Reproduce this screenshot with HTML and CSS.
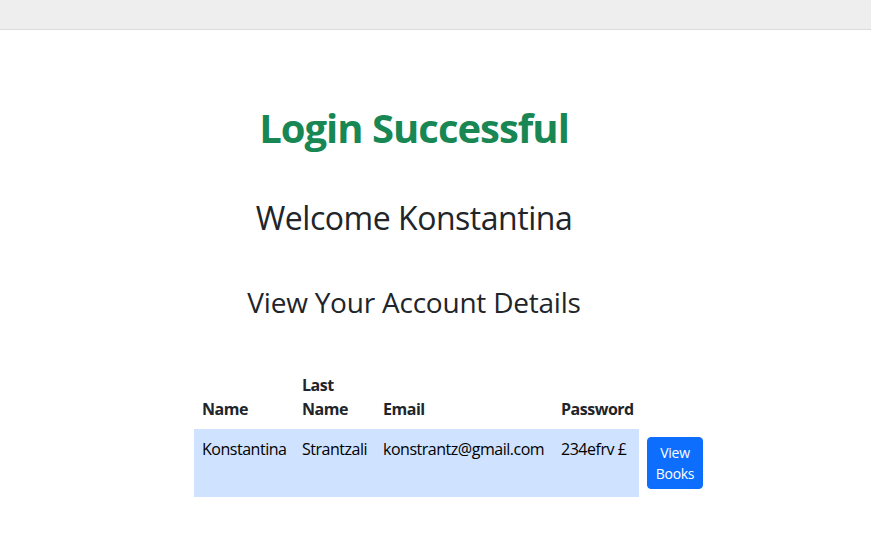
FILE: index.html
```html
<!DOCTYPE html>
<html lang="en">
<head>
<meta charset="utf-8">
<title>Login Successful</title>
<link rel="stylesheet" href="styles.css">
</head>
<body>
<div class="topbar"></div>
<main class="content">
  <h1 class="title">Login Successful</h1>
  <h2 class="welcome">Welcome Konstantina</h2>
  <h3 class="subtitle">View Your Account Details</h3>
  <table class="details">
    <colgroup>
      <col class="c-name">
      <col class="c-last">
      <col class="c-email">
      <col class="c-pass">
      <col class="c-btn">
    </colgroup>
    <thead>
      <tr>
        <th>Name</th>
        <th>Last Name</th>
        <th>Email</th>
        <th>Password</th>
        <th></th>
      </tr>
    </thead>
    <tbody>
      <tr>
        <td class="hl">Konstantina</td>
        <td class="hl">Strantzali</td>
        <td class="hl">konstrantz@gmail.com</td>
        <td class="hl">234efrv £</td>
        <td><button class="btn">View Books</button></td>
      </tr>
    </tbody>
  </table>
</main>
</body>
</html>
```

FILE: styles.css
```css
html, body {
  margin: 0;
  padding: 0;
  background: #ffffff;
}

body {
  font-family: "Open Sans", "Noto Sans", "DejaVu Sans", sans-serif;
  color: #212529;
  font-size: 16px;
  line-height: 24px;
  letter-spacing: -0.03em;
}

.topbar {
  height: 29px;
  background: #eeeeee;
  border-bottom: 1px solid #dcdcdc;
}

.content {
  width: 828px;
  padding-top: 74px;
  text-align: center;
}

.title {
  margin: 0;
  font-size: 40px;
  line-height: 48px;
  font-weight: 700;
  color: #198754;
  letter-spacing: -0.025em;
}

.welcome {
  margin: 47px 0 0;
  font-size: 32px;
  line-height: 38px;
  font-weight: 500;
  color: #212529;
  letter-spacing: -0.015em;
}

.subtitle {
  margin: 48px 0 0;
  font-size: 28px;
  line-height: 34px;
  font-weight: 500;
  color: #212529;
  letter-spacing: -0.008em;
}

.details {
  margin: 46px 0 0 194px;
  border-collapse: collapse;
  table-layout: fixed;
  width: 517px;
  text-align: left;
}

.c-name { width: 100px; }
.c-last { width: 81px; }
.c-email { width: 178px; }
.c-pass { width: 86px; }
.c-btn { width: 72px; }

.details th,
.details td {
  padding: 8px;
}

.details thead th {
  vertical-align: bottom;
  font-weight: 700;
}

.details tbody td {
  vertical-align: top;
}

.details .hl {
  background: #cfe2ff;
  color: #000000;
}

.btn {
  font-family: inherit;
  letter-spacing: -0.02em;
  display: inline-block;
  font-size: 14px;
  line-height: 21px;
  padding: 4px 7px;
  border: 1px solid #0d6efd;
  border-radius: 4px;
  background: #0d6efd;
  color: #ffffff;
  text-align: center;
  cursor: pointer;
}
```
